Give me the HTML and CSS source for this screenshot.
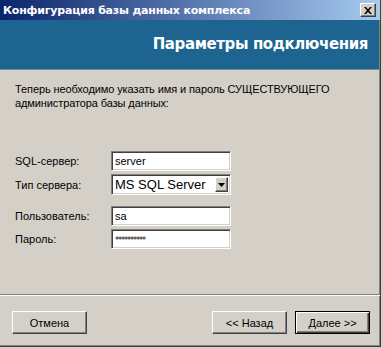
FILE: index.html
```html
<!DOCTYPE html>
<html lang="ru">
<head>
<meta charset="utf-8">
<title>Конфигурация базы данных комплекса</title>
<link rel="stylesheet" href="styles.css">
</head>
<body>
<div class="window">
  <div class="titlebar">
    <span class="title">Конфигурация базы данных комплекса</span>
    <span class="close"><svg width="8" height="7" viewBox="0 0 8 7"><path d="M0 0h2l2 2.2L6 0h2L5 3.5 8 7H6L4 4.8 2 7H0l3-3.5z" fill="#000"/></svg></span>
  </div>
  <div class="header">
    <div class="header-title">Параметры подключения</div>
  </div>
  <div class="content">
    <p class="intro">Теперь необходимо указать имя и пароль СУЩЕСТВУЮЩЕГО администратора базы данных:</p>
    <div class="form">
      <div class="group">
        <div class="row">
          <label class="label">SQL-сервер:</label>
          <div class="field"><span class="value">server</span></div>
        </div>
        <div class="row">
          <label class="label">Тип сервера:</label>
          <div class="field select"><span class="value big">MS SQL Server</span><span class="arrow"><svg width="7" height="4" viewBox="0 0 7 4"><path d="M0 0h7L3.5 4z" fill="#000"/></svg></span></div>
        </div>
      </div>
      <div class="group">
        <div class="row">
          <label class="label">Пользователь:</label>
          <div class="field"><span class="value">sa</span></div>
        </div>
        <div class="row">
          <label class="label">Пароль:</label>
          <div class="field"><span class="value pw">**********</span></div>
        </div>
      </div>
    </div>
  </div>
  <div class="footer">
    <button class="btn">Отмена</button>
    <div class="nav">
      <button class="btn">&lt;&lt; Назад</button>
      <button class="btn default">Далее &gt;&gt;</button>
    </div>
  </div>
</div>
</body>
</html>
```
FILE: styles.css
```css
* { box-sizing: border-box; }
html, body { margin: 0; padding: 0; background: #d4d0c8; }
body { width: 383px; height: 348px; overflow: hidden; font-family: "Liberation Sans", Arial, sans-serif; font-size: 11px; color: #000; }
.window {
  width: 381px; height: 347px;
  display: flex; flex-direction: column;
  background: #d4d0c8;
  border-right: 1px solid #404040;
  border-bottom: 1px solid #404040;
  box-shadow: inset -1px -1px 0 #808080;
}
.titlebar {
  height: 20px; flex: none;
  display: flex; align-items: center; justify-content: space-between;
  padding: 0 4px 0 3px;
  background: linear-gradient(to right, #0a246a, #a6caf0);
}
.title { color: #fff; font-weight: bold; font-size: 11px; font-family: "DejaVu Sans", sans-serif; letter-spacing: -0.2px; }
.close {
  width: 16px; height: 14px;
  display: flex; align-items: center; justify-content: center;
  background: #d4d0c8;
  border: 1px solid; border-color: #fff #404040 #404040 #fff;
  box-shadow: inset -1px -1px 0 #808080;
}
.header {
  height: 50px; flex: none;
  background: #1d6590;
  border-bottom: 1px solid #6f8ea3;
  margin-right: 1px;
  display: flex; justify-content: flex-end;
  padding: 15px 11px 0 0;
}
.header-title { color: #fff; font-weight: bold; font-size: 15px; font-family: "DejaVu Sans", sans-serif; letter-spacing: -0.4px; }
.content { flex: 1; padding: 12px 15px 0 15px; }
.intro { margin: 0; line-height: 14px; width: 330px; letter-spacing: -0.1px; }
.form { margin-top: 41px; display: flex; flex-direction: column; gap: 11px; }
.group { display: flex; flex-direction: column; gap: 3px; }
.row { display: flex; align-items: center; }
.label { width: 96px; }
.field {
  width: 120px; height: 20px;
  background: #fff;
  border: 1px solid; border-color: #808080 #fff #fff #808080;
  box-shadow: inset 1px 1px 0 #404040, inset -1px -1px 0 #d4d0c8;
  display: flex; align-items: center; padding: 0 3px;
}
.field.select { height: 21px; padding-right: 2px; }
.value { flex: 1; }
.value.big { font-size: 13px; }
.value.pw { font-family: "DejaVu Sans", sans-serif; font-size: 8px; letter-spacing: -1px; padding-top: 3px; }
.arrow {
  width: 13px; height: 15px; flex: none;
  background: #d4d0c8;
  border: 1px solid; border-color: #fff #404040 #404040 #fff;
  box-shadow: inset -1px -1px 0 #808080;
  display: flex; align-items: center; justify-content: center;
}
.footer {
  flex: none; height: 52px;
  border-top: 1px solid #808080;
  box-shadow: inset 0 1px 0 #fff;
  display: flex; justify-content: space-between; align-items: flex-start;
  padding: 16px 10px 0 12px;
}
.nav { display: flex; gap: 8px; }
.btn {
  width: 75px; height: 23px;
  font-family: "Liberation Sans", Arial, sans-serif; font-size: 11px; color: #000;
  background: #d4d0c8;
  border: 1px solid; border-color: #fff #404040 #404040 #fff;
  box-shadow: inset -1px -1px 0 #808080;
  padding: 0;
}
.btn.default {
  border: 1px solid #000;
  box-shadow: inset 1px 1px 0 #fff, inset -1px -1px 0 #404040, inset -2px -2px 0 #808080;
}
```
